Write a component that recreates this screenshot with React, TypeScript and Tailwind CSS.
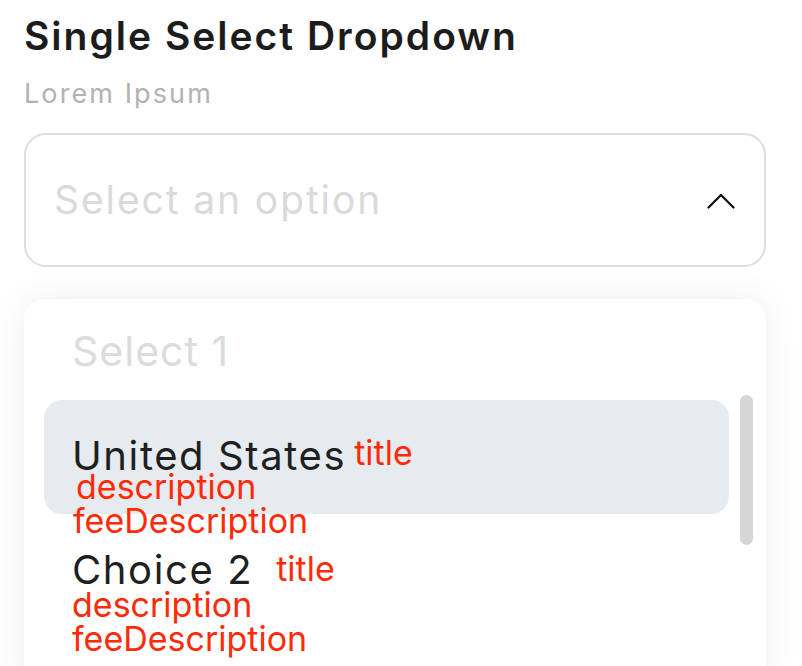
import React from 'react';

type Option = {
  label: string;
  highlighted?: boolean;
  titleClass: string;
  descClass: string;
  feeClass: string;
};

const options: Option[] = [
  { label: 'United States', highlighted: true, titleClass: 'ml-[8px]', descClass: '-mt-[10px] ml-[4px]', feeClass: 'ml-[1px]' },
  { label: 'Choice 2', titleClass: 'ml-[23px] mt-[2px]', descClass: '-mt-[6px]', feeClass: 'ml-0' },
];

const ChevronUp = () => (
  <svg width="28" height="16" viewBox="0 0 28 16" fill="none" className="shrink-0 mt-[2px]">
    <polyline points="1.5,14.5 14,2 26.5,14.5" stroke="#111" strokeWidth="2.3" strokeLinecap="round" strokeLinejoin="round" />
  </svg>
);

const OptionRow = ({ option }: { option: Option }) => (
  <div className={`h-[114px] rounded-[18px] px-7 pt-8 ${option.highlighted ? 'bg-[#e6ebf0]' : ''}`}>
    <div className="flex items-start">
      <span className="text-[40px] leading-[48px] tracking-[1.6px] text-[#1f1f1f]">{option.label}</span>
      <span className={`text-[34px] leading-[41px] text-[#ff2a08] ${option.titleClass}`}>title</span>
    </div>
    <div className={`text-[34px] leading-[34px] text-[#ff2a08] ${option.descClass}`}>description</div>
    <div className={`text-[34px] leading-[34px] text-[#ff2a08] ${option.feeClass}`}>feeDescription</div>
  </div>
);

export default function App() {
  return (
    <div className="w-[802px] h-[666px] overflow-hidden bg-white px-6 pt-[14px] font-['Inter',sans-serif]">
      <h1 className="text-[39px] leading-[44px] tracking-[2px] font-semibold text-[#1c1c1c]">Single Select Dropdown</h1>
      <p className="mt-[20px] text-[27px] leading-[32px] tracking-[2.1px] text-[#b2b2b2]">Lorem Ipsum</p>

      <div className="mt-[23px] flex h-[134px] w-[742px] items-center justify-between rounded-[22px] border-2 border-[#dddddd] pl-7 pr-[29px]">
        <span className="text-[39px] leading-[48px] tracking-[1.9px] text-[#dadada]">Select an option</span>
        <ChevronUp />
      </div>

      <div className="relative mt-8 w-[742px] h-[400px] rounded-[20px] bg-white pl-5 pr-[37px] pt-[28px] shadow-[0_0_36px_rgba(0,0,0,0.07)]">
        <div className="pl-7 text-[41px] leading-[48px] tracking-[1px] text-[#dcdcdc]">Select 1</div>
        <div className="mt-[25px] flex flex-col">
          {options.map((o) => (
            <OptionRow key={o.label} option={o} />
          ))}
        </div>
        <div className="absolute left-[716px] top-[96px] h-[150px] w-[13px] rounded-full bg-[#d6d6d6]" />
      </div>
    </div>
  );
}
